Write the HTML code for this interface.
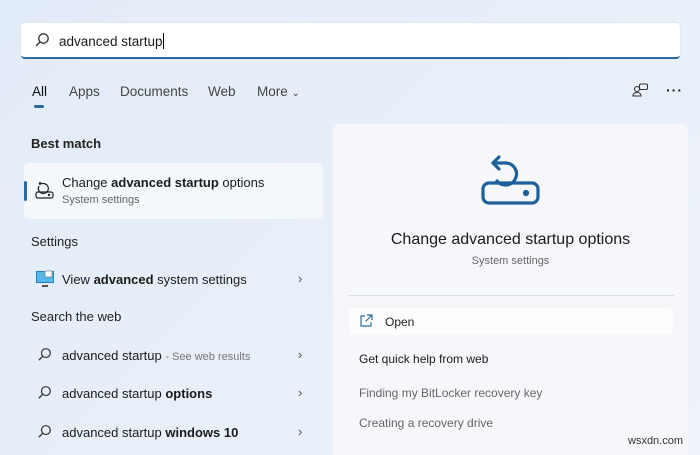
<!DOCTYPE html>
<html style="overflow:hidden;height:455px"><head><style>
body{margin:0;width:700px;height:455px;overflow:hidden;background:linear-gradient(135deg,#e2ecf8 0%,#e8eff9 50%,#eef2f9 100%);font-family:"Liberation Sans",sans-serif;color:#1b1b1b;position:relative}
.a{position:absolute;white-space:nowrap}
.search{left:21px;top:23px;width:659px;height:34px;background:#fff;border-radius:4px;border-bottom:2px solid #2c6aa0;box-shadow:0 0 1px #bcc8d6}
.tab{font-size:13.5px;color:#444;top:84px}
.h{font-size:13px;font-weight:bold;color:#222}
.row{font-size:13px;color:#1b1b1b}
.chev{font-size:13px;color:#555;left:298px}
.panel{left:333px;top:124px;width:355px;height:331px;background:#f6f7fb;border-radius:7px 7px 0 0}
.g{color:#666;font-size:12px}
</style></head><body>
<div class="a search"></div>
<svg class="a" style="left:34px;top:32px" width="16" height="16" viewBox="0 0 16 16"><circle cx="9.5" cy="6.5" r="4.7" fill="none" stroke="#333" stroke-width="1.3"/><path d="M6.2 9.8L2 14" stroke="#333" stroke-width="1.4"/></svg>
<div class="a" style="left:59px;top:33px;font-size:13.5px">advanced startup<span style="display:inline-block;width:1px;height:16px;background:#000;vertical-align:-3px"></span></div>
<div class="a tab" style="left:32px;color:#111">All</div>
<div class="a" style="left:34px;top:105px;width:10px;height:3px;border-radius:2px;background:#2c6aa0"></div>
<div class="a tab" style="left:69px">Apps</div>
<div class="a tab" style="left:120px">Documents</div>
<div class="a tab" style="left:208px">Web</div>
<div class="a tab" style="left:257px">More <span style="font-size:10px">⌄</span></div>
<svg class="a" style="left:632px;top:82px" width="17" height="17" viewBox="0 0 17 17" fill="none" stroke="#333" stroke-width="1.1"><circle cx="5" cy="7" r="2.5"/><path d="M1 14c0-2.5 2-3.5 4-3.5s4 1 4 3.5z"/><rect x="7.5" y="2" width="8" height="5.5" rx="1.5"/></svg>
<div class="a" style="left:666px;top:82px;font-size:14px;font-weight:bold;letter-spacing:1px">···</div>
<div class="a h" style="left:31px;top:136px">Best match</div>
<div class="a" style="left:24px;top:163px;width:299px;height:56px;background:#f4f7fb;border-radius:4px"></div>
<div class="a" style="left:24px;top:181px;width:3px;height:20px;background:#2c6aa0;border-radius:2px"></div>
<svg class="a" style="left:35px;top:181px" width="20" height="20" viewBox="0 0 20 20" fill="none" stroke="#222" stroke-width="1.2"><path d="M4 5a5 5 0 1 0 4-2.5H4M4 2.5l1.5-1.5M4 2.5l1.5 1.5"/><rect x="1" y="11" width="17" height="6" rx="2"/><circle cx="14" cy="14" r=".6" fill="#222"/></svg>
<div class="a row" style="left:62px;top:175px">Change <b>advanced startup</b> options</div>
<div class="a g" style="left:62px;top:194px;font-size:11px">System settings</div>
<div class="a h" style="left:31px;top:234px;font-weight:normal;color:#222">Settings</div>
<svg class="a" style="left:35px;top:270px" width="20" height="18" viewBox="0 0 20 18"><rect x="1" y="1" width="18" height="12" fill="#1e86c8"/><rect x="2" y="2" width="16" height="10" fill="#5ab7ea"/><rect x="10" y="1" width="7" height="6" fill="#fff" stroke="#555" stroke-width=".5"/><path d="M7 15h6v2H7z" fill="#555"/></svg>
<div class="a row" style="left:62px;top:272px">View <b>advanced</b> system settings</div>
<div class="a chev" style="top:271px">›</div>
<div class="a h" style="left:31px;top:309px;font-weight:normal;color:#222">Search the web</div>
<svg class="a" style="left:37px;top:347px" width="15" height="15" viewBox="0 0 16 16"><circle cx="9.5" cy="6.5" r="4.7" fill="none" stroke="#333" stroke-width="1.3"/><path d="M6.2 9.8L2 14" stroke="#333" stroke-width="1.4"/></svg>
<div class="a row" style="left:62px;top:348px">advanced startup <span style="color:#777;font-size:11px">- See web results</span></div>
<div class="a chev" style="top:347px">›</div>
<svg class="a" style="left:37px;top:385px" width="15" height="15" viewBox="0 0 16 16"><circle cx="9.5" cy="6.5" r="4.7" fill="none" stroke="#333" stroke-width="1.3"/><path d="M6.2 9.8L2 14" stroke="#333" stroke-width="1.4"/></svg>
<div class="a row" style="left:62px;top:386px">advanced startup <b>options</b></div>
<div class="a chev" style="top:385px">›</div>
<svg class="a" style="left:37px;top:424px" width="15" height="15" viewBox="0 0 16 16"><circle cx="9.5" cy="6.5" r="4.7" fill="none" stroke="#333" stroke-width="1.3"/><path d="M6.2 9.8L2 14" stroke="#333" stroke-width="1.4"/></svg>
<div class="a row" style="left:62px;top:425px">advanced startup <b>windows 10</b></div>
<div class="a chev" style="top:424px">›</div>
<div class="a panel"></div>
<svg class="a" style="left:480px;top:153px" width="62" height="54" viewBox="0 0 62 54" fill="none" stroke="#1f5f9b" stroke-width="3.2" stroke-linecap="round" stroke-linejoin="round"><path d="M13 10H25A11 11 0 1 1 17 28"/><path d="M13 10L19 4M13 10L19 16"/><rect x="3" y="30" width="55" height="20" rx="6"/><circle cx="46" cy="40" r="1.5" fill="#1f5f9b"/></svg>
<div class="a" style="left:333px;width:355px;text-align:center;top:231px;font-size:16px">Change advanced startup options</div>
<div class="a g" style="left:333px;width:355px;text-align:center;top:255px;font-size:11px">System settings</div>
<div class="a" style="left:348px;top:295px;width:326px;height:1px;background:#dcdfe4"></div>
<div class="a" style="left:349px;top:308px;width:324px;height:27px;background:#fdfdfe;border-radius:4px"></div>
<svg class="a" style="left:359px;top:314px" width="14" height="14" viewBox="0 0 14 14" fill="none" stroke="#2a6f9e" stroke-width="1.2"><path d="M6 2H2v10h10V8M8 1h5v5M13 1L6.5 7.5"/></svg>
<div class="a" style="left:385px;top:315px;font-size:12px">Open</div>
<div class="a" style="left:359px;top:352px;font-size:12px">Get quick help from web</div>
<div class="a g" style="left:359px;top:386px">Finding my BitLocker recovery key</div>
<div class="a g" style="left:359px;top:416px">Creating a recovery drive</div>
<div class="a" style="left:628px;top:435px;font-size:11px;color:#333">wsxdn.com</div>
</body></html>
